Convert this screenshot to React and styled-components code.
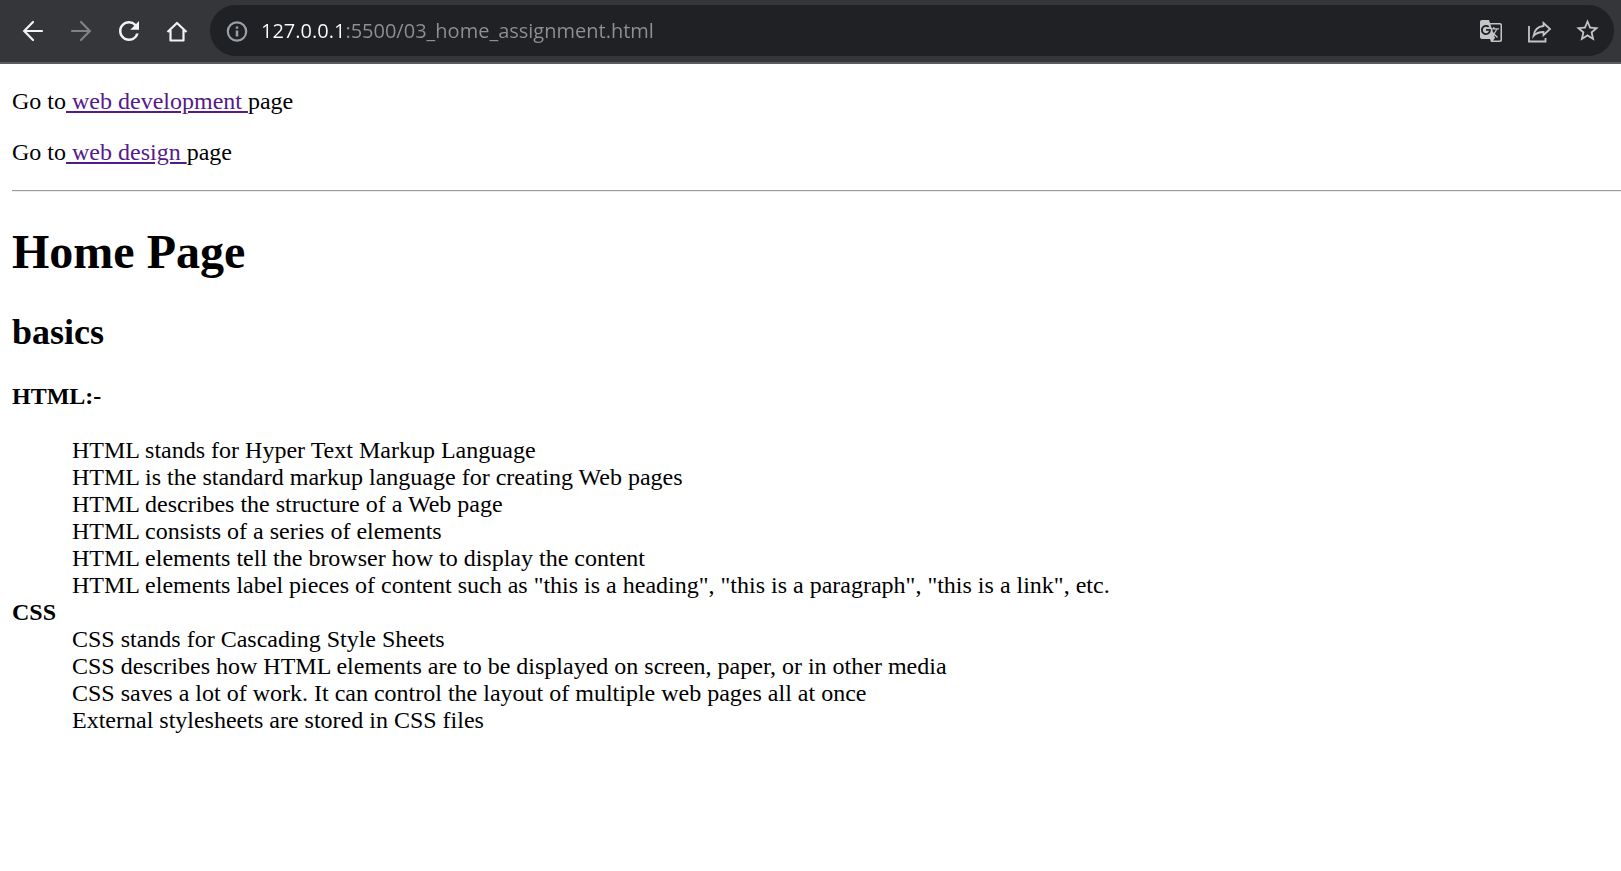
import React from "react";
import styled, { createGlobalStyle } from "styled-components";
import { MdGTranslate, MdStarBorder, MdRefresh } from "react-icons/md";

const GlobalStyle = createGlobalStyle`
  body {
    margin: 0;
    background: #fff;
    color: #000;
    font-family: "Liberation Serif", "Times New Roman", serif;
    font-size: 24px;
    line-height: 27px;
  }
`;

const Toolbar = styled.header`
  display: flex;
  align-items: center;
  gap: 9px;
  height: 61px;
  padding: 0 7px 1px 9px;
  background: #35363a;
  border-bottom: 2px solid #5c5d61;
`;

const ButtonGroup = styled.nav`
  display: flex;
`;

const IconButton = styled.button`
  display: flex;
  align-items: center;
  justify-content: center;
  width: 48px;
  height: 48px;
  padding: 0;
  border: 0;
  border-radius: 24px;
  background: none;
  color: ${({ $tone }) => $tone || "#f1f3f4"};
`;

const AddressBar = styled.form`
  display: flex;
  flex: 1;
  align-items: center;
  height: 51px;
  padding: 0 3px 0 12px;
  border-radius: 26px;
  background: #202124;
`;

const InfoButton = styled(IconButton)`
  width: 30px;
`;

const AddressInput = styled.input`
  flex: 1;
  min-width: 0;
  height: 30px;
  margin-left: 9px;
  padding: 0;
  border: 0;
  outline: 0;
  color: #9a9b9d;
  font-family: "Open Sans", "Noto Sans", sans-serif;
  font-size: 20px;
  background: linear-gradient(to right, #fff 84px, #8f9092 84px);
  background-clip: text;
  -webkit-background-clip: text;
  -webkit-text-fill-color: transparent;
`;

const Drawing = styled.svg`
  width: 30px;
  height: 30px;
  fill: none;
  stroke: currentColor;
  stroke-width: ${({ $weight }) => $weight || 2};
`;

const Page = styled.main`
  padding-left: 12px;
`;

const Paragraph = styled.p`
  margin: 24px 0;
`;

const PageLink = styled.a`
  color: #551a8b;
  text-decoration: underline;
`;

const Rule = styled.hr`
  margin: 24px 0 32px;
  border: 0;
  border-top: 1px solid #9a9a9a;
  border-bottom: 1px solid #eee;
`;

const Title = styled.h1`
  margin: 32px 0;
  font-size: 48px;
  line-height: 56px;
`;

const Subtitle = styled.h2`
  margin: 32px 0 30px;
  font-size: 36px;
  line-height: 41px;
`;

const Definitions = styled.dl`
  margin: 0;
`;

const Term = styled.dt`
  margin-bottom: ${({ $spaced }) => ($spaced ? "27px" : "0")};
  font-weight: bold;
`;

const Detail = styled.dd`
  margin: 0 0 0 60px;
`;

const htmlFacts = [
  "HTML stands for Hyper Text Markup Language",
  "HTML is the standard markup language for creating Web pages",
  "HTML describes the structure of a Web page",
  "HTML consists of a series of elements",
  "HTML elements tell the browser how to display the content",
  'HTML elements label pieces of content such as "this is a heading", "this is a paragraph", "this is a link", etc.',
];

const cssFacts = [
  "CSS stands for Cascading Style Sheets",
  "CSS describes how HTML elements are to be displayed on screen, paper, or in other media",
  "CSS saves a lot of work. It can control the layout of multiple web pages all at once",
  "External stylesheets are stored in CSS files",
];

const BackIcon = () => (
  <Drawing viewBox="0 0 30 30" $weight={2.2} strokeLinecap="round">
    <path d="M15 6 6.200 15 15 24M6.500 15H24" />
  </Drawing>
);

const ForwardIcon = () => (
  <Drawing viewBox="0 0 30 30" $weight={2.2} strokeLinecap="round">
    <path d="M15 6 23.800 15 15 24M23.500 15H6" />
  </Drawing>
);

const HomeIcon = () => (
  <Drawing viewBox="0 0 30 30" $weight={2.2} strokeLinejoin="round">
    <path d="M5.500 16 15 7 24.500 16M8.500 14V24.500H21.500V14" />
  </Drawing>
);

const InfoIcon = () => (
  <Drawing viewBox="0 0 30 30" $weight={2.2}>
    <circle cx="15" cy="15.500" r="9.200" />
    <path d="M15 14.500V20.500M15 10.500V12.700" strokeWidth="2.500" />
  </Drawing>
);

const ShareIcon = () => (
  <Drawing viewBox="0 0 30 30" $weight={1.8}>
    <path d="M5 10V25.500H21.500V22" />
    <path d="M19.500 7 26 13 19.500 19.200V16C15 16 12 17 9.500 20 10.300 14 14 10.500 19.500 10Z" />
  </Drawing>
);

export default function App() {
  return (
    <>
      <GlobalStyle />
      <Toolbar>
        <ButtonGroup aria-label="Browser">
          <IconButton aria-label="Back"><BackIcon /></IconButton>
          <IconButton aria-label="Forward" $tone="#818286"><ForwardIcon /></IconButton>
          <IconButton aria-label="Reload"><MdRefresh size={30} /></IconButton>
          <IconButton aria-label="Home"><HomeIcon /></IconButton>
        </ButtonGroup>
        <AddressBar onSubmit={(event) => event.preventDefault()}>
          <InfoButton type="button" aria-label="Site information" $tone="#9aa0a6">
            <InfoIcon />
          </InfoButton>
          <AddressInput
            type="text"
            aria-label="Address"
            spellCheck={false}
            defaultValue="127.0.0.1:5500/03_home_assignment.html"
          />
          <IconButton type="button" aria-label="Translate" $tone="#c4c4c4"><MdGTranslate size={24} /></IconButton>
          <IconButton type="button" aria-label="Share" $tone="#c4c4c4"><ShareIcon /></IconButton>
          <IconButton type="button" aria-label="Bookmark" $tone="#c4c4c4"><MdStarBorder size={27} /></IconButton>
        </AddressBar>
      </Toolbar>
      <Page>
        <Paragraph>
          Go to<PageLink href="#development"> web development </PageLink>page
        </Paragraph>
        <Paragraph>
          Go to<PageLink href="#design"> web design </PageLink>page
        </Paragraph>
        <Rule />
        <Title>Home Page</Title>
        <Subtitle>basics</Subtitle>
        <Definitions>
          <Term $spaced>HTML:-</Term>
          {htmlFacts.map((fact) => <Detail key={fact}>{fact}</Detail>)}
          <Term>CSS</Term>
          {cssFacts.map((fact) => <Detail key={fact}>{fact}</Detail>)}
        </Definitions>
      </Page>
    </>
  );
}
